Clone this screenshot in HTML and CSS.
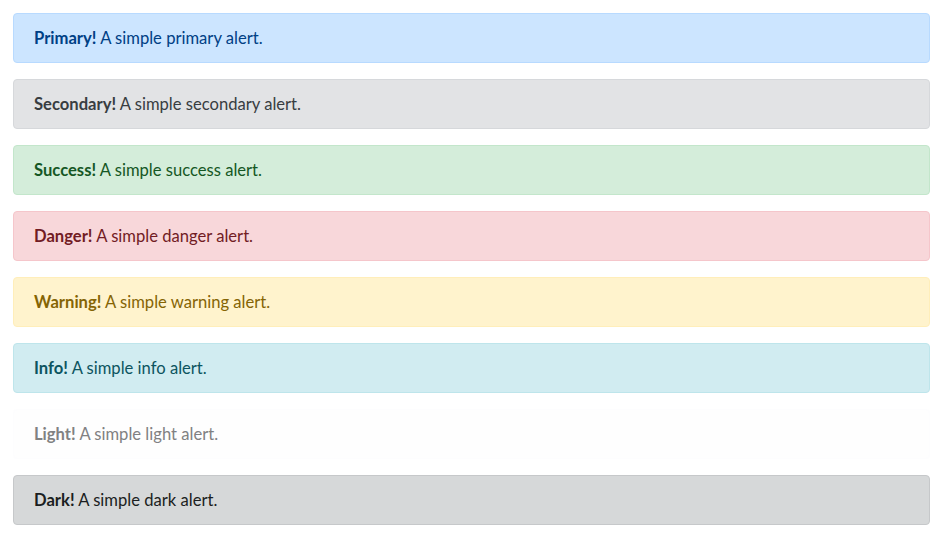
FILE: index.html
```html
<!DOCTYPE html>
<html lang="en">
<head>
    <meta charset="UTF-8">
    <meta name="viewport" content="width=device-width, initial-scale=1.0">
    <title>Alerts</title>
    <link rel="stylesheet" href="styles.css">
</head>
<body>
    <div class="container">
        <div class="alert alert-primary"><strong>Primary!</strong> A simple primary alert.</div>
        <div class="alert alert-secondary"><strong>Secondary!</strong> A simple secondary alert.</div>
        <div class="alert alert-success"><strong>Success!</strong> A simple success alert.</div>
        <div class="alert alert-danger"><strong>Danger!</strong> A simple danger alert.</div>
        <div class="alert alert-warning"><strong>Warning!</strong> A simple warning alert.</div>
        <div class="alert alert-info"><strong>Info!</strong> A simple info alert.</div>
        <div class="alert alert-light"><strong>Light!</strong> A simple light alert.</div>
        <div class="alert alert-dark"><strong>Dark!</strong> A simple dark alert.</div>
    </div>
</body>
</html>
```

FILE: styles.css
```css
body {
    margin: 0;
    font-family: 'Lato', 'Open Sans', sans-serif;
    font-size: 16.6px;
    line-height: 24px;
    color: #212529;
    background-color: #fff;
}

.container {
    padding: 13px 14px 0 13px;
}

.alert {
    padding: 12px 20px;
    margin-bottom: 16px;
    border: 1px solid transparent;
    border-radius: 4px;
}

.alert strong {
    font-weight: 700;
}

.alert-primary {
    color: #004085;
    background-color: #cce5ff;
    border-color: #b8daff;
}

.alert-secondary {
    color: #383d41;
    background-color: #e2e3e5;
    border-color: #d6d8db;
}

.alert-success {
    color: #155724;
    background-color: #d4edda;
    border-color: #c3e6cb;
}

.alert-danger {
    color: #721c24;
    background-color: #f8d7da;
    border-color: #f5c6cb;
}

.alert-warning {
    color: #856404;
    background-color: #fff3cd;
    border-color: #ffeeba;
}

.alert-info {
    color: #0c5460;
    background-color: #d1ecf1;
    border-color: #bee5eb;
}

.alert-light {
    color: #818182;
    background-color: #fefefe;
    border-color: #fdfdfe;
}

.alert-dark {
    color: #1b1e21;
    background-color: #d6d8d9;
    border-color: #c6c8ca;
}
```
